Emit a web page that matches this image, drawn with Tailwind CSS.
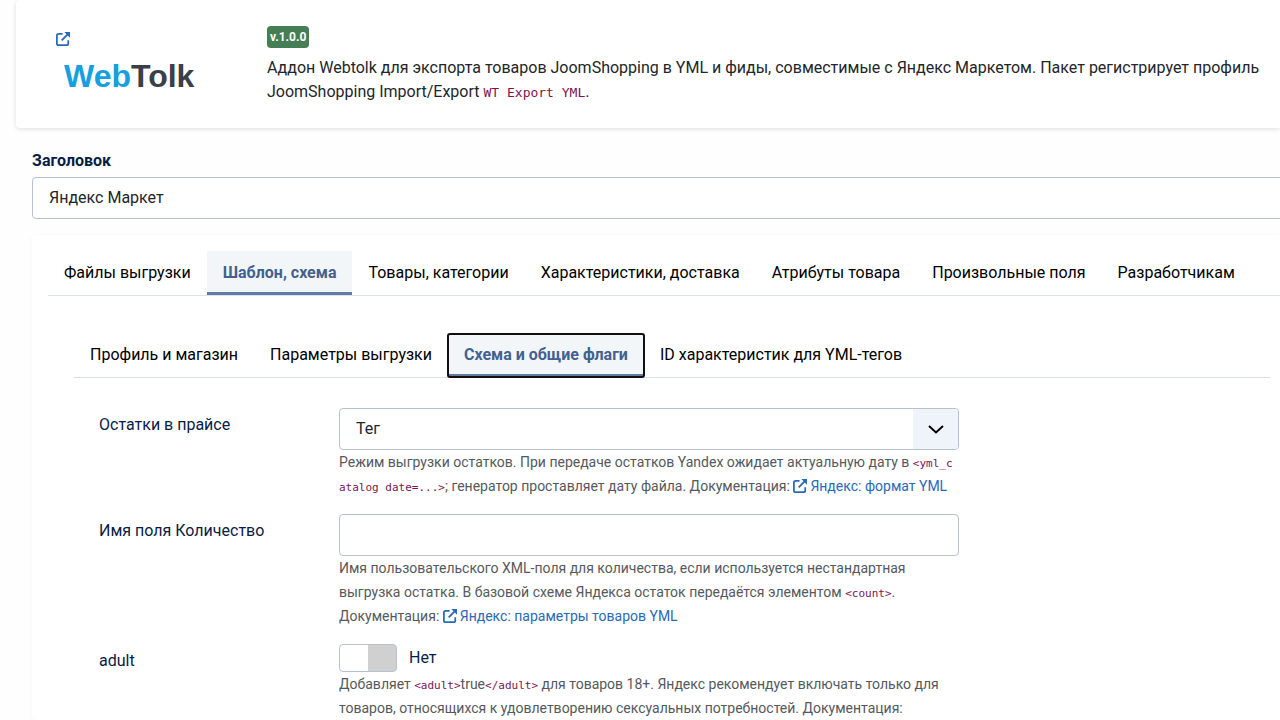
<!DOCTYPE html>
<html lang="ru">
<head>
  <meta charset="UTF-8" />
  <meta name="viewport" content="width=device-width, initial-scale=1" />
  <title>WT Export YML</title>
  <script src="https://cdn.jsdelivr.net/npm/@tailwindcss/browser@4"></script>
</head>
<body class="bg-[#fefefe] font-[Roboto,sans-serif] text-base text-[#22262a] overflow-x-hidden">
  <!-- Icons -->
  <svg class="hidden">
    <symbol id="external" viewBox="0 0 16 16">
      <path d="M7.5 2H3A2 2 0 0 0 1 4V13A2 2 0 0 0 3 15H12A2 2 0 0 0 14 13V9.500" fill="none" stroke="currentColor" stroke-width="2" />
      <path d="M6.500 9.500L13 3" fill="none" stroke="currentColor" stroke-width="2.200" />
      <path d="M9.500 0H16V6.500Z" fill="currentColor" />
    </symbol>
  </svg>

  <div class="pl-4">
    <!-- Plugin info -->
    <header class="flex rounded-l bg-white pt-[26px] pr-4 pb-6 pl-10 shadow-[0_1px_5px_rgba(0,0,0,0.13)]">
      <a href="#" class="block w-[211px] shrink-0 pt-1.5 text-[#2a69b8]">
        <svg class="size-3.5"><use href="#external" /></svg>
        <span class="block pl-2 pt-2.5 font-['Liberation_Sans',sans-serif] text-[32px] leading-10 font-bold text-[#384048]"><span class="text-[#189fdf]">Web</span>Tolk</span>
      </a>
      <div>
        <span class="block w-fit rounded bg-[#457d54] px-[3px] text-xs leading-[22px] font-bold text-white">v.1.0.0</span>
        <p class="mt-2">
          Аддон Webtolk для экспорта товаров JoomShopping в YML и фиды, совместимые с Яндекс Маркетом. Пакет регистрирует профиль JoomShopping Import/Export <code class="font-['DejaVu_Sans_Mono',monospace] text-[13px] leading-none text-[#7d1450]">WT Export YML</code>.
        </p>
      </div>
    </header>

    <form class="pt-5 pl-4">
      <label for="title" class="block pt-px font-bold text-[#081c44]">Заголовок</label>
      <div class="-mr-4">
        <input id="title" type="text" value="Яндекс Маркет" class="mt-1 h-[42px] w-full rounded border border-[#b4c2d2] bg-white px-4 pb-0.5" />
      </div>

      <div class="mt-4 rounded-l bg-white pt-4 pl-4 shadow-[0_1px_5px_rgba(0,0,0,0.04)]">
        <!-- Main tabs -->
        <div role="tablist" class="flex border-b border-[#dbe1e5] whitespace-nowrap text-black">
          <button type="button" role="tab" class="h-11 px-4">Файлы выгрузки</button>
          <button type="button" role="tab" aria-selected="true" class="h-11 bg-[#f2f6f9] px-4 font-bold text-[#43618f] shadow-[inset_0_-3px_#5f7da3]">Шаблон, схема</button>
          <button type="button" role="tab" class="h-11 px-4">Товары, категории</button>
          <button type="button" role="tab" class="h-11 px-4">Характеристики, доставка</button>
          <button type="button" role="tab" class="h-11 px-4">Атрибуты товара</button>
          <button type="button" role="tab" class="h-11 px-4">Произвольные поля</button>
          <button type="button" role="tab" class="h-11 px-4">Разработчикам</button>
        </div>

        <div class="mr-2.5 ml-[26px] pt-[38px]">
          <!-- Nested tabs -->
          <div role="tablist" class="flex border-b border-[#dbe1e5] whitespace-nowrap text-black">
            <button type="button" role="tab" class="h-[43px] px-4 pb-px">Профиль и магазин</button>
            <button type="button" role="tab" class="h-[43px] px-4 pb-px">Параметры выгрузки</button>
            <button type="button" role="tab" aria-selected="true" class="h-[43px] rounded-xs bg-[#f2f6f9] px-4 pb-px font-bold text-[#43618f] shadow-[inset_0_-3px_#5f7da3] outline-2 -outline-offset-1 outline-[#101010]">Схема и общие флаги</button>
            <button type="button" role="tab" class="h-[43px] px-4 pb-px">ID характеристик для YML-тегов</button>
          </div>

          <div class="flex flex-col gap-4 px-[25px] pt-[30px]">
            <div class="flex">
              <label for="stock" class="w-60 shrink-0 pt-[5px] text-[#081c44]">Остатки в прайсе</label>
              <div class="w-[620px]">
                <div class="relative">
                  <select id="stock" class="block h-[42px] w-full appearance-none rounded border border-[#b4c2d2] bg-white px-4">
                    <option>Тег</option>
                  </select>
                  <span class="pointer-events-none absolute inset-y-px right-px flex w-[45px] items-center justify-center rounded-r-[3px] bg-[#eff3fa] text-black">
                    <svg class="size-4" viewBox="0 0 16 16" fill="none" stroke="currentColor" stroke-width="2"><path d="M1 5L8 11.500L15 5" /></svg>
                  </span>
                </div>
                <p class="text-sm leading-6 text-[#55595d]">
                  Режим выгрузки остатков. При передаче остатков Yandex ожидает актуальную дату в <code class="font-['DejaVu_Sans_Mono',monospace] text-[11px] leading-none break-all text-[#7d1450]">&lt;yml_catalog date=...&gt;</code>; генератор проставляет дату файла. Документация: <a href="#" class="text-[#2a69b8]"><svg class="mr-[3px] inline size-3.5 align-[-2px]"><use href="#external" /></svg>Яндекс: формат YML</a>
                </p>
              </div>
            </div>

            <div class="flex">
              <label for="count" class="w-60 shrink-0 pt-[5px] text-[#081c44]">Имя поля Количество</label>
              <div class="w-[620px]">
                <input id="count" type="text" class="block h-[42px] w-full rounded border border-[#b4c2d2] bg-white px-4" />
                <p class="text-sm leading-6 text-[#55595d]">
                  Имя пользовательского XML-поля для количества, если используется нестандартная выгрузка остатка. В базовой схеме Яндекса остаток передаётся элементом <code class="font-['DejaVu_Sans_Mono',monospace] text-[11px] leading-none break-all text-[#7d1450]">&lt;count&gt;</code>. Документация: <a href="#" class="text-[#2a69b8]"><svg class="mr-[3px] inline size-3.5 align-[-2px]"><use href="#external" /></svg>Яндекс: параметры товаров YML</a>
                </p>
              </div>
            </div>

            <div class="flex">
              <label for="adult" class="w-60 shrink-0 pt-[5px] text-[#081c44]">adult</label>
              <div class="w-[620px]">
                <label class="flex h-7 items-center gap-3 text-[#081c44]">
                  <input id="adult" type="checkbox" role="switch" class="h-7 w-[58px] appearance-none rounded border border-[#b4c2d2] bg-linear-to-r from-white from-50% to-[#d0d0d0] to-50%" />
                  Нет
                </label>
                <p class="text-sm leading-6 text-[#55595d]">
                  Добавляет <code class="font-['DejaVu_Sans_Mono',monospace] text-[11px] leading-none text-[#7d1450]">&lt;adult&gt;</code>true<code class="font-['DejaVu_Sans_Mono',monospace] text-[11px] leading-none text-[#7d1450]">&lt;/adult&gt;</code> для товаров 18+. Яндекс рекомендует включать только для товаров, относящихся к удовлетворению сексуальных потребностей. Документация:
                </p>
              </div>
            </div>
          </div>
        </div>
      </div>
    </form>
  </div>
</body>
</html>
